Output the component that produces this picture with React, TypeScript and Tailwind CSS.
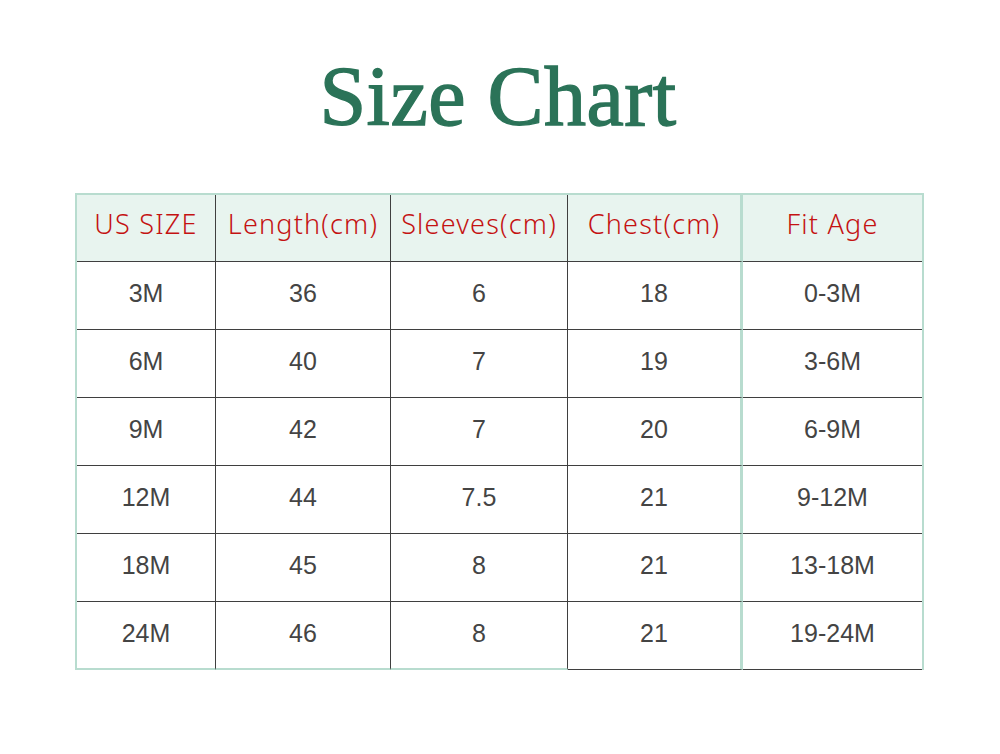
const rows = [
  ['3M', '36', '6', '18', '0-3M'],
  ['6M', '40', '7', '19', '3-6M'],
  ['9M', '42', '7', '20', '6-9M'],
  ['12M', '44', '7.5', '21', '9-12M'],
  ['18M', '45', '8', '21', '13-18M'],
  ['24M', '46', '8', '21', '19-24M'],
]

const heads = ['US SIZE', 'Length(cm)', 'Sleeves(cm)', 'Chest(cm)', 'Fit Age']

// column right-edge styles
const colSep = [
  'border-r border-r-[#3f3f3f]',
  'border-r border-r-[#3f3f3f]',
  'border-r border-r-[#3f3f3f]',
  'border-r-[3px] border-r-[#b8dccf]',
  '',
]

export default function App() {
  return (
    <div className="w-[1000px] h-[754px] bg-white flex flex-col items-center">
      <h1 className="mt-[52px] ml-[-4px] h-[90px] text-[84px] leading-[90px] text-[#2b7358] font-['Liberation_Serif',serif] tracking-[0.5px] [-webkit-text-stroke:1.4px_#2b7358]">
        Size Chart
      </h1>

      <div className="mt-[51px] ml-[-1px] border-2 border-b-0 border-[#b8dccf] grid grid-cols-[139px_175px_177px_175px_179px]">
        {heads.map((h, i) => (
          <div
            key={h}
            className={`h-[67px] bg-[#e8f4ef] flex items-center justify-center pb-[8px] text-[27px] tracking-[1.2px] text-[#c41212] font-['Noto_Sans',sans-serif] font-light border-b border-b-[#3f3f3f] ${colSep[i]}`}
          >
            {h}
          </div>
        ))}
        {rows.map((r, ri) =>
          r.map((c, ci) => {
            const last = ri === rows.length - 1
            const bottom = last
              ? ci < 3
                ? 'border-b-2 border-b-[#b8dccf]'
                : 'border-b border-b-[#3f3f3f]'
              : 'border-b border-b-[#3f3f3f]'
            return (
              <div
                key={ri + '-' + ci}
                className={`h-[68px] flex items-center justify-center pb-[3px] text-[25px] text-[#444444] font-['Liberation_Sans',Arial,sans-serif] ${bottom} ${colSep[ci]}`}
              >
                {c}
              </div>
            )
          })
        )}
      </div>
    </div>
  )
}
